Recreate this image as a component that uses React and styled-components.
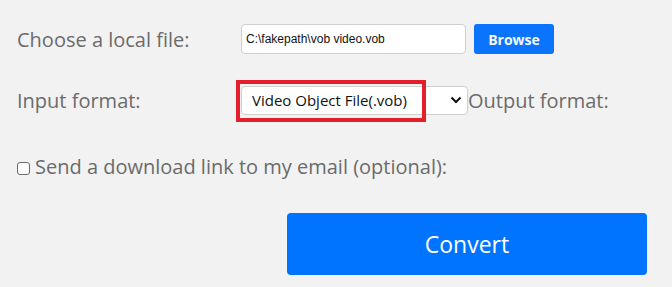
import React from "react";
import styled, { createGlobalStyle } from "styled-components";

const GlobalStyle = createGlobalStyle`
  html, body {
    margin: 0;
    background: #f2f2f2;
  }
  body {
    font-family: "Open Sans", "Liberation Sans", sans-serif;
  }
`;

const Form = styled.form`
  display: flex;
  flex-direction: column;
  padding: 24px 0 0 17px;
  width: 672px;
  height: 287px;
  box-sizing: border-box;
`;

const Row = styled.div`
  display: grid;
  grid-template-columns: 224px auto;
  align-items: center;
  height: 30px;
  margin-bottom: ${(p) => p.gap || 0}px;
`;

const Label = styled.label`
  font-size: 20px;
  color: #6b6b6b;
  white-space: nowrap;
`;

const Controls = styled.div`
  display: flex;
  align-items: center;
`;

const PathInput = styled.input`
  box-sizing: border-box;
  width: 225px;
  height: 30px;
  padding: 0 4px;
  border: 1px solid #cfcfcf;
  border-radius: 4px;
  background: #fff;
  font-family: "Liberation Sans", Arial, sans-serif;
  font-size: 12px;
  color: #111;
  outline: none;
`;

const SmallButton = styled.button`
  margin-left: 8px;
  width: 80px;
  height: 30px;
  border: none;
  border-radius: 3px;
  background: #0a74fc;
  color: #f4f8ff;
  font-family: "Open Sans", sans-serif;
  font-weight: 700;
  font-size: 14px;
  cursor: pointer;
`;

const SelectWrap = styled.div`
  position: relative;
  display: flex;
`;

const Highlight = styled.span`
  position: absolute;
  left: -5px;
  top: -6px;
  width: 190px;
  height: 42px;
  box-sizing: border-box;
  border: 4px solid #e31f2a;
  pointer-events: none;
`;

const Select = styled.div`
  box-sizing: border-box;
  width: 227px;
  height: 29px;
  display: flex;
  align-items: center;
  justify-content: space-between;
  padding: 0 5px 0 10px;
  border: 1px solid #cfcfcf;
  border-radius: 4px;
  background: #fff;
  font-size: 15px;
  color: #111;
`;

const CheckRow = styled.label`
  display: flex;
  align-items: center;
  margin-top: 38px;
  font-size: 20px;
  color: #6b6b6b;
`;

const Box = styled.span`
  width: 13px;
  height: 13px;
  box-sizing: border-box;
  border: 1px solid #6a6a6a;
  border-radius: 3px;
  background: #fff;
  margin: 3px 5px 0 0;
`;

const BigButton = styled.button`
  margin: 33px 0 0 270px;
  width: 360px;
  height: 62px;
  border: none;
  border-radius: 4px;
  background: #0073ff;
  color: #fff;
  font-family: "Open Sans", sans-serif;
  font-size: 23px;
  cursor: pointer;
`;

const Chevron = () => (
  <svg width="12" height="8" viewBox="0 0 12 8">
    <path d="M1.5 1.5 6 6l4.5-4.5" fill="none" stroke="#111" strokeWidth="2" />
  </svg>
);

export default function App() {
  return (
    <>
      <GlobalStyle />
      <Form>
        <Row gap={31}>
          <Label>Choose a local file:</Label>
          <Controls>
            <PathInput readOnly value="C:\fakepath\vob video.vob" />
            <SmallButton type="button">Browse</SmallButton>
          </Controls>
        </Row>
        <Row>
          <Label>Input format:</Label>
          <Controls>
            <SelectWrap>
              <Select>
                <span>Video Object File(.vob)</span>
                <Chevron />
              </Select>
              <Highlight />
            </SelectWrap>
            <Label>Output format:</Label>
          </Controls>
        </Row>
        <CheckRow>
          <Box />
          Send a download link to my email (optional):
        </CheckRow>
        <BigButton type="button">Convert</BigButton>
      </Form>
    </>
  );
}
